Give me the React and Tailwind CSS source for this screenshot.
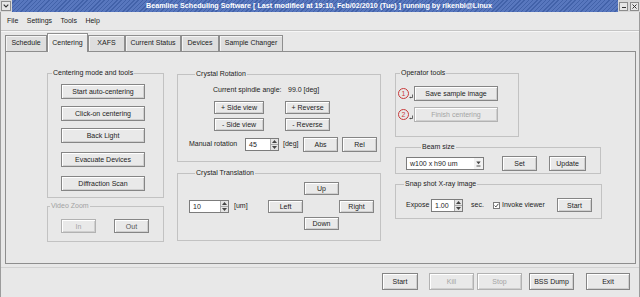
import React from "react";

const FONT = "font-['Liberation_Sans',Arial,sans-serif]";

function Btn({ cls = "", disabled = false, children }) {
  return (
    <button
      type="button"
      className={`flex shrink-0 items-center justify-center border bg-[#e9e9e9] leading-none shadow-[inset_1px_1px_0_#ffffff,inset_-1px_-1px_0_#cfcfcf] ${
        disabled ? "border-[#b2b2b2] text-[#a4a4a4]" : "border-[#858585] text-[#1c1c1c]"
      } ${cls}`}
    >
      {children}
    </button>
  );
}

function Group({ title, cls = "", legendCls = "", disabled = false, children }) {
  return (
    <fieldset className={`border border-[#c2c2c2] ${cls}`}>
      <legend
        className={`px-[1px] leading-[8px] ${disabled ? "text-[#a2a2a2]" : "text-[#1c1c1c]"} ${legendCls}`}
      >
        {title}
      </legend>
      {children}
    </fieldset>
  );
}

function Spinner({ value, cls = "" }) {
  return (
    <div className={`flex shrink-0 border border-[#7c7c7c] bg-white ${cls}`}>
      <div className="flex flex-1 items-center pl-[3px] leading-none">{value}</div>
      <div className="flex w-[8px] flex-col border-l border-[#a8a8a8] bg-[#e4e4e4]">
        <div className="flex flex-1 items-center justify-center border-b border-[#a8a8a8]">
          <svg width="5" height="3" viewBox="0 0 5 3">
            <path d="M0 3 L2.5 0 L5 3 Z" fill="#444" />
          </svg>
        </div>
        <div className="flex flex-1 items-center justify-center">
          <svg width="5" height="3" viewBox="0 0 5 3">
            <path d="M0 0 L2.5 3 L5 0 Z" fill="#444" />
          </svg>
        </div>
      </div>
    </div>
  );
}

function Num({ n }) {
  return (
    <span className="flex h-[11px] w-[11px] shrink-0 items-center justify-center rounded-full border border-[#c83a3a] text-[7px] leading-none text-[#c83a3a]">
      {n}
    </span>
  );
}

function Mark() {
  return (
    <svg width="4" height="11" viewBox="0 0 4 11" className="shrink-0">
      <path d="M3.5 6.5 V9.5 H0.8" stroke="#444" strokeWidth="0.8" fill="none" />
      <path d="M0.3 9.5 L1.6 8.5 L1.6 10.5 Z" fill="#444" />
    </svg>
  );
}

const tabs = [
  ["Schedule", "w-[42px]", false],
  ["Centering", "w-[41px]", true],
  ["XAFS", "w-[37px]", false],
  ["Current Status", "w-[56px]", false],
  ["Devices", "w-[38px]", false],
  ["Sample Changer", "w-[64px]", false],
];

export default function App() {
  return (
    <div
      className={`flex h-[297px] w-[640px] flex-col overflow-hidden bg-[#e8e8e8] text-[7px] text-[#1c1c1c] ${FONT}`}
    >
      {/* Title bar */}
      <div className="flex h-[12px] shrink-0 items-stretch bg-[#d8d8d8]">
        <div className="flex w-[12px] items-center justify-center">
          <div className="flex h-[10px] w-[10px] items-center justify-center border border-[#8c8c8c] bg-[#e6e6e6]">
            <svg width="6" height="4" viewBox="0 0 6 4">
              <path d="M0.7 0.7 L3 3 L5.3 0.7" stroke="#333" strokeWidth="1.1" fill="none" />
            </svg>
          </div>
        </div>
        <div className="flex flex-1 items-center justify-center bg-[repeating-linear-gradient(135deg,#5877be_0px,#5877be_2px,#4262a9_2px,#4262a9_3px)] pl-[8px] text-[7.2px] font-bold leading-none text-white">
          Beamline Scheduling Software [ Last modified at 19:10, Feb/02/2010 (Tue) ] running by rikenbl@Linux
        </div>
        <div className="flex w-[22px] items-center justify-center gap-[2px]">
          <div className="flex h-[9px] w-[9px] items-center justify-center border border-[#8c8c8c] bg-[#e6e6e6]">
            <div className="mt-[2px] h-[1px] w-[4px] bg-[#333]" />
          </div>
          <div className="flex h-[9px] w-[9px] items-center justify-center border border-[#8c8c8c] bg-[#e6e6e6]">
            <svg width="5" height="5" viewBox="0 0 5 5">
              <path d="M0.5 0.5 L4.5 4.5 M4.5 0.5 L0.5 4.5" stroke="#333" strokeWidth="1" />
            </svg>
          </div>
        </div>
      </div>

      <div className="flex flex-1 flex-col border-x border-[#9c9c9c]">
        {/* Menu */}
        <div className="flex h-[18px] items-center gap-[8.5px] pl-[6px]">
          <span>File</span>
          <span>Settings</span>
          <span>Tools</span>
          <span>Help</span>
        </div>
        <div className="h-[2px] border-t border-[#c4c4c4] bg-[#f6f6f6]" />

        {/* Tabs */}
        <div className="ml-[4px] mt-[1px] flex h-[18px] items-end">
          {tabs.map(([label, w, sel]) => (
            <div
              key={label}
              className={`flex items-center justify-center border-x border-t border-[#8e8e8e] ${w} ${
                sel
                  ? "relative z-10 -mb-px h-[19px] bg-[#e8e8e8] shadow-[inset_1px_1px_0_#ffffff]"
                  : "h-[16px] bg-[#dedede] shadow-[inset_1px_1px_0_#f4f4f4]"
              }`}
            >
              {label}
            </div>
          ))}
        </div>

        {/* Panel */}
        <div className="ml-[4px] flex h-[213px] w-[631px] items-start border border-[#8e8e8e] pt-[17px]">
          {/* Left column */}
          <div className="ml-[41px] flex w-[117px] shrink-0 flex-col">
            <Group title="Centering mode and tools" legendCls="ml-[4px]">
              <div className="flex flex-col pb-[6px] pl-[13px]">
                <Btn cls="mt-[7px] h-[15px] w-[84px]">Start auto-centering</Btn>
                <Btn cls="mt-[7px] h-[15px] w-[84px]">Click-on centering</Btn>
                <Btn cls="mt-[7px] h-[15px] w-[84px]">Back Light</Btn>
                <Btn cls="mt-[9px] h-[15px] w-[84px]">Evacuate Devices</Btn>
                <Btn cls="mt-[9px] h-[15px] w-[84px]">Diffraction Scan</Btn>
              </div>
            </Group>
            <Group title="Video Zoom" cls="mt-[4px]" legendCls="ml-[2px]" disabled>
              <div className="flex gap-[18px] pb-[8px] pl-[13px] pt-[9px]">
                <Btn cls="h-[14px] w-[35px]" disabled>
                  In
                </Btn>
                <Btn cls="h-[14px] w-[35px] text-[#555]">Out</Btn>
              </div>
            </Group>
          </div>

          {/* Middle column */}
          <div className="ml-[13px] mt-[1px] flex w-[204px] shrink-0 flex-col">
            <Group title="Crystal Rotation" legendCls="ml-[17px]">
              <div className="flex flex-col pb-[9px]">
                <div className="ml-[35px] mt-[8px] flex h-[8px] items-center">
                  <span className="w-[75px]">Current spindle angle:</span>
                  <span>99.0 [deg]</span>
                </div>
                <div className="ml-[36px] mt-[7px] flex gap-[21px]">
                  <Btn cls="h-[13px] w-[50px]">+ Side view</Btn>
                  <Btn cls="h-[13px] w-[45px]">+ Reverse</Btn>
                </div>
                <div className="ml-[36px] mt-[4px] flex gap-[21px]">
                  <Btn cls="h-[13px] w-[50px]">- Side view</Btn>
                  <Btn cls="h-[13px] w-[45px]">- Reverse</Btn>
                </div>
                <div className="ml-[11px] mt-[6px] flex h-[15px] items-center">
                  <span className="w-[56px]">Manual rotation</span>
                  <Spinner value="45" cls="h-[13px] w-[34px]" />
                  <span className="ml-[4px] w-[20px]">[deg]</span>
                  <Btn cls="h-[15px] w-[35px]">Abs</Btn>
                  <Btn cls="ml-[4px] h-[15px] w-[35px]">Rel</Btn>
                </div>
              </div>
            </Group>
            <Group title="Crystal Translation" cls="mt-[7px]" legendCls="ml-[17px]">
              <div className="flex items-center pb-[10px] pt-[5px]">
                <div className="ml-[11px] flex w-[79px] items-center">
                  <Spinner value="10" cls="h-[13px] w-[40px]" />
                  <span className="ml-[5px]">[um]</span>
                </div>
                <div className="flex flex-col">
                  <Btn cls="ml-[36px] h-[13px] w-[35px]">Up</Btn>
                  <div className="mt-[5px] flex">
                    <Btn cls="h-[13px] w-[35px]">Left</Btn>
                    <Btn cls="ml-[36px] h-[13px] w-[35px]">Right</Btn>
                  </div>
                  <Btn cls="ml-[36px] mt-[4px] h-[13px] w-[35px]">Down</Btn>
                </div>
              </div>
            </Group>
          </div>

          {/* Right column */}
          <div className="ml-[14px] flex w-[207px] shrink-0 flex-col">
            <Group title="Operator tools" cls="w-[124px]" legendCls="ml-[4px]">
              <div className="flex flex-col pb-[14px] pt-[9px]">
                <div className="flex items-center pl-[2px]">
                  <Num n="1" />
                  <Mark />
                  <Btn cls="ml-[1px] h-[15px] w-[84px]">Save sample image</Btn>
                </div>
                <div className="mt-[6px] flex items-center pl-[2px]">
                  <Num n="2" />
                  <Mark />
                  <Btn cls="ml-[1px] h-[15px] w-[84px]" disabled>
                    Finish centering
                  </Btn>
                </div>
              </div>
            </Group>

            <Group title="Beam size" cls="mt-[6px] w-[206px]" legendCls="ml-[25px]">
              <div className="flex items-center pb-[2px] pl-[10px] pt-[5px]">
                <div className="flex h-[13px] w-[78px] shrink-0 border border-[#7c7c7c] bg-white">
                  <div className="flex flex-1 items-center pl-[3px] leading-none">w100 x h90 um</div>
                  <div className="flex w-[9px] items-center justify-center bg-[#f2f2f2]">
                    <svg width="5" height="6" viewBox="0 0 5 6">
                      <path d="M0.3 0.5 L2.5 3.3 L4.7 0.5 Z" fill="#444" />
                      <path d="M0.5 5 H4.5" stroke="#444" strokeWidth="0.9" />
                    </svg>
                  </div>
                </div>
                <Btn cls="ml-[18px] h-[15px] w-[35px]">Set</Btn>
                <Btn cls="ml-[12px] h-[15px] w-[37px]">Update</Btn>
              </div>
            </Group>

            <Group title="Snap shot X-ray image" cls="mt-[6px] w-[207px]" legendCls="ml-[8px]">
              <div className="flex items-center pb-[6px] pl-[10px] pt-[10px]">
                <span className="w-[25px]">Expose</span>
                <Spinner value="1.00" cls="h-[13px] w-[32px]" />
                <span className="ml-[8px] w-[22px]">sec.</span>
                <div className="flex h-[7px] w-[7px] shrink-0 items-center justify-center border border-[#7a7a7a] bg-white">
                  <svg width="5" height="5" viewBox="0 0 5 5">
                    <path d="M0.6 2.6 L1.9 3.9 L4.4 0.8" stroke="#333" strokeWidth="0.9" fill="none" />
                  </svg>
                </div>
                <span className="ml-[2px]">Invoke viewer</span>
                <Btn cls="ml-auto mr-[9px] h-[14px] w-[35px]">Start</Btn>
              </div>
            </Group>
          </div>
        </div>

        {/* Bottom bar */}
        <div className="mt-[3px] h-px bg-[#d2d2d2]" />
        <div className="mt-[5px] flex justify-end pr-[9px]">
          <Btn cls="h-[17px] w-[36px]">Start</Btn>
          <Btn cls="ml-[11px] h-[17px] w-[45px]" disabled>
            Kill
          </Btn>
          <Btn cls="ml-[3px] h-[17px] w-[45px]" disabled>
            Stop
          </Btn>
          <Btn cls="ml-[7px] h-[17px] w-[45px]">BSS Dump</Btn>
          <Btn cls="ml-[12px] h-[17px] w-[44px]">Exit</Btn>
        </div>
      </div>
    </div>
  );
}
